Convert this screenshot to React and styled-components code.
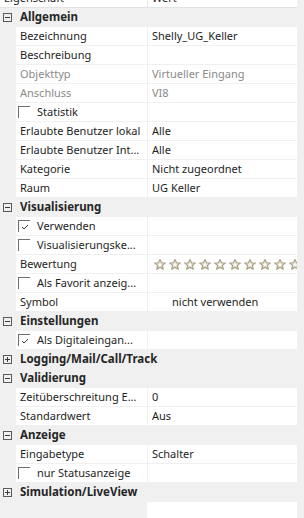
import React from "react";
import styled, { createGlobalStyle } from "styled-components";

const GlobalStyle = createGlobalStyle`
  html, body {
    margin: 0;
    padding: 0;
    background: #f0f0f0;
    overflow: hidden;
  }
  body {
    font-family: "Noto Sans", "Open Sans", sans-serif;
    font-size: 11px;
    color: #1e1e1e;
  }
`;

const Grid = styled.div`
  width: 297px;
  display: flex;
  flex-direction: column;
`;

const Header = styled.div`
  display: grid;
  grid-template-columns: 147px 1fr;
  height: 18px;
  margin-top: -11px;
  background: #fff;
  border-bottom: 1px solid #e3e3e3;
  & > span {
    padding-left: 4px;
    line-height: 18px;
    white-space: nowrap;
    overflow: hidden;
  }
  & > span + span {
    border-left: 1px solid #e3e3e3;
  }
`;

const Row = styled.div`
  display: grid;
  grid-template-columns: 16px 131px 1fr;
  height: 18px;
  border-bottom: 1px solid #f0f0f0;
  background: ${(p) => (p.$category ? "#f0f0f0" : "#fff")};
`;

const Gutter = styled.div`
  background: #f0f0f0;
  display: flex;
  align-items: center;
  padding-left: 3px;
`;

const Expander = styled.div`
  width: 7px;
  height: 7px;
  border: 1px solid #5a5a5a;
  position: relative;
  &::before {
    content: "";
    position: absolute;
    left: 1px;
    right: 1px;
    top: 3px;
    height: 1px;
    background: #3a3a3a;
  }
  &::after {
    content: "";
    display: ${(p) => (p.$open ? "none" : "block")};
    position: absolute;
    top: 1px;
    bottom: 1px;
    left: 3px;
    width: 1px;
    background: #3a3a3a;
  }
`;

const Name = styled.div`
  display: flex;
  align-items: center;
  gap: 7px;
  padding-left: ${(p) => (p.$check ? "2px" : "4px")};
  line-height: 18px;
  white-space: nowrap;
  overflow: hidden;
  color: ${(p) => (p.$disabled ? "#8a8a8a" : "#1e1e1e")};
`;

const CategoryName = styled.div`
  grid-column: 2 / 4;
  padding-left: 4px;
  line-height: 18px;
  white-space: nowrap;
  font-weight: 700;
  font-size: 11.5px;
  color: #262626;
`;

const Value = styled.div`
  border-left: 1px solid #f0f0f0;
  padding-left: ${(p) => p.$indent || 4}px;
  line-height: 18px;
  white-space: nowrap;
  overflow: hidden;
  color: ${(p) => (p.$disabled ? "#8a8a8a" : "#1e1e1e")};
  display: flex;
  align-items: center;
`;

const CheckBox = styled.div`
  width: 12px;
  height: 12px;
  box-sizing: border-box;
  border-top: 1px solid #6e6e6e;
  border-left: 1px solid #6e6e6e;
  display: flex;
  align-items: center;
  justify-content: center;
  flex: none;
`;

const Stars = styled.div`
  display: flex;
  gap: 3px;
  padding-left: 2px;
`;

const Filler = styled.div`
  display: grid;
  grid-template-columns: 147px 1fr;
  height: 20px;
  & > div + div {
    background: #fff;
  }
`;

const Star = () => (
  <svg width="12" height="11" viewBox="0 0 12 11">
    <defs>
      <linearGradient id="sg" x1="0" y1="0" x2="0" y2="1">
        <stop offset="0" stopColor="#f2efe6" />
        <stop offset="1" stopColor="#d8d1bd" />
      </linearGradient>
    </defs>
    <path
      d="M6 0.6 L7.5 3.8 L11.3 4.1 L8.4 6.4 L9.3 10.2 L6 8.2 L2.7 10.2 L3.6 6.4 L0.7 4.1 L4.5 3.8 Z"
      fill="url(#sg)"
      stroke="#a69c80"
      strokeWidth="1.1"
      strokeLinejoin="round"
    />
    <path d="M6 3.4 L6.7 5 L8.2 5.1 L7 6.1 L7.4 7.7 L6 6.9 L4.6 7.7 L5 6.1 L3.8 5.1 L5.3 5 Z" fill="#fbfaf6" />
  </svg>
);

const Check = () => (
  <svg width="8" height="8" viewBox="0 0 8 8">
    <path d="M1 4 L3 6 L7 2" fill="none" stroke="#3c3c3c" strokeWidth="1" />
  </svg>
);

const rows = [
  { cat: "Allgemein", open: true },
  { name: "Bezeichnung", value: "Shelly_UG_Keller" },
  { name: "Beschreibung", value: "" },
  { name: "Objekttyp", value: "Virtueller Eingang", disabled: true },
  { name: "Anschluss", value: "VI8", disabled: true },
  { name: "Statistik", check: true, checked: false },
  { name: "Erlaubte Benutzer lokal", value: "Alle" },
  { name: "Erlaubte Benutzer Int...", value: "Alle" },
  { name: "Kategorie", value: "Nicht zugeordnet" },
  { name: "Raum", value: "UG Keller" },
  { cat: "Visualisierung", open: true },
  { name: "Verwenden", check: true, checked: true },
  { name: "Visualisierungske...", check: true, checked: false },
  { name: "Bewertung", stars: 11 },
  { name: "Als Favorit anzeig...", check: true, checked: false },
  { name: "Symbol", value: "nicht verwenden", indent: 24 },
  { cat: "Einstellungen", open: true },
  { name: "Als Digitaleingan...", check: true, checked: true },
  { cat: "Logging/Mail/Call/Track", open: false },
  { cat: "Validierung", open: true },
  { name: "Zeitüberschreitung E...", value: "0" },
  { name: "Standardwert", value: "Aus" },
  { cat: "Anzeige", open: true },
  { name: "Eingabetype", value: "Schalter" },
  { name: "nur Statusanzeige", check: true, checked: false },
  { cat: "Simulation/LiveView", open: false },
];

export default function App() {
  return (
    <>
      <GlobalStyle />
      <Grid>
        <Header>
          <span>Eigenschaft</span>
          <span>Wert</span>
        </Header>
        {rows.map((r, i) =>
          r.cat ? (
            <Row key={i} $category>
              <Gutter>
                <Expander $open={r.open} />
              </Gutter>
              <CategoryName>{r.cat}</CategoryName>
            </Row>
          ) : (
            <Row key={i}>
              <Gutter />
              <Name $disabled={r.disabled} $check={r.check}>
                {r.check && <CheckBox>{r.checked && <Check />}</CheckBox>}
                {r.name}
              </Name>
              <Value $disabled={r.disabled} $indent={r.indent}>
                {r.stars ? (
                  <Stars>
                    {Array.from({ length: r.stars }).map((_, k) => (
                      <Star key={k} />
                    ))}
                  </Stars>
                ) : (
                  r.value
                )}
              </Value>
            </Row>
          )
        )}
        <Filler>
          <div />
          <div />
        </Filler>
      </Grid>
    </>
  );
}
